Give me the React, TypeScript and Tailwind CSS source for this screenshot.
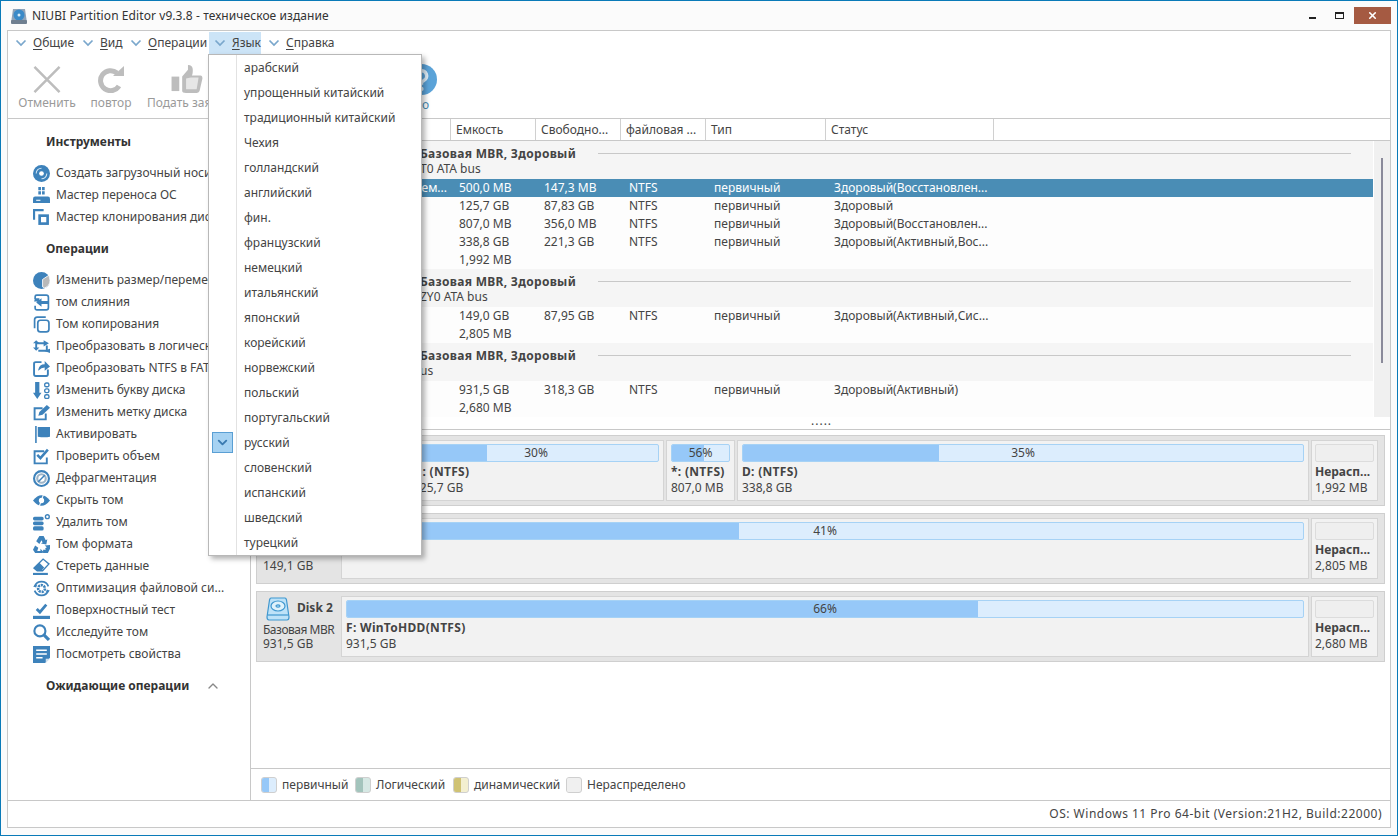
import { ChevronDown, ChevronUp, X } from "lucide-react";
import type { ReactNode } from "react";

const BLUE = "#3d82bb";

function Ico({ children }: { children: ReactNode }) {
  return (
    <svg viewBox="0 0 16 16" className="h-[17px] w-[17px] shrink-0" fill="none" stroke={BLUE} strokeWidth="1.6">
      {children}
    </svg>
  );
}

const F = { fill: BLUE, stroke: "none" };

const tools: { label: string; icon: ReactNode }[] = [
  {
    label: "Создать загрузочный носит",
    icon: (
      <>
        <circle cx="8" cy="8" r="8" {...F} />
        <circle cx="8" cy="8" r="2.200" fill="#fff" stroke="none" />
        <path d="M3 8a5 5 0 0 1 5-5M13 8a5 5 0 0 1-5 5" stroke="#cfe3f2" strokeWidth="1" />
      </>
    ),
  },
  {
    label: "Мастер переноса ОС",
    icon: (
      <>
        <path d="M5 0h2.500v3H5zM8.500 0H11v3H8.500zM5 4h2.500v3H5zM8.500 4H11v3H8.500z" {...F} />
        <path d="M0 11q0-2 2-2h12q2 0 2 2v4H0z" {...F} />
        <path d="M3 12.500h4" stroke="#fff" strokeWidth="1" />
      </>
    ),
  },
  {
    label: "Мастер клонирования диск",
    icon: (
      <>
        <path d="M1 10V1h9" strokeWidth="2" />
        <path d="M5 5h10v10H5z" {...F} />
        <path d="M7.500 7.500h5v5h-5z" fill="#fff" stroke="none" />
      </>
    ),
  },
];

const ops: { label: string; icon: ReactNode }[] = [
  {
    label: "Изменить размер/перемес",
    icon: (
      <>
        <circle cx="8" cy="8" r="8" {...F} />
        <path d="M15 3l1 5q0 5-5 7l-2-1V7z" fill="#b9b9b9" stroke="#fff" strokeWidth="0.800" />
      </>
    ),
  },
  {
    label: "том слияния",
    icon: (
      <>
        <path d="M2 5V2.500Q2 1 3.500 1h9Q14.500 1 14.500 3v10q0 2-2 2h-9Q2 15 2 13.500V11" />
        <path d="M1 7h5V4l-4 0zM8 4L3 8l5 4V9.500h7v-3H8z" {...F} />
      </>
    ),
  },
  {
    label: "Том копирования",
    icon: (
      <>
        <path d="M1.500 11.500v-8Q1.500 1 4 1h8" />
        <rect x="4.500" y="4" width="10.500" height="11" rx="2.500" />
      </>
    ),
  },
  {
    label: "Преобразовать в логическ",
    icon: (
      <>
        <path d="M3 11V5h8M5 12h8V7" strokeWidth="1.800" />
        <path d="M0 5h6L3 2zM10 2l5 3-5 3zM10 12l6-2v4zM0 9l3 3 3-3z" {...F} />
      </>
    ),
  },
  {
    label: "Преобразовать NTFS в FAT",
    icon: (
      <>
        <path d="M14 9v4.500q0 1.500-1.500 1.500h-10Q1 15 1 13.500v-10Q1 2 2.500 2H8" strokeWidth="1.800" />
        <path d="M5 9q1-5 6-5V1l5 5-5 4V7q-3 0-6 3z" {...F} />
      </>
    ),
  },
  {
    label: "Изменить букву диска",
    icon: (
      <>
        <path d="M2 0h4v10h2l-4 6-4-6h2z" {...F} />
        <rect x="11" y="1" width="4" height="3.500" rx="1.500" strokeWidth="1.300" />
        <rect x="11" y="6.500" width="4" height="3.500" rx="1.500" strokeWidth="1.300" />
        <rect x="11" y="12" width="4" height="3.500" rx="1.500" strokeWidth="1.300" />
      </>
    ),
  },
  {
    label: "Изменить метку диска",
    icon: (
      <>
        <path d="M12 9v5.500H1.500V4H9" strokeWidth="1.800" />
        <path d="M5 11l1-3.500L13 1l3 2.500L9 10z" {...F} />
      </>
    ),
  },
  {
    label: "Активировать",
    icon: <path d="M2 0h1.500v16H2zM4.500 1h11.500v9q-5 1-11.500 0z" {...F} />,
  },
  {
    label: "Проверить объем",
    icon: (
      <>
        <path d="M13 9v5.500H1.500V3h9" strokeWidth="1.800" />
        <path d="M4 6.500l3 3 7-8" strokeWidth="2.400" />
      </>
    ),
  },
  {
    label: "Дефрагментация",
    icon: (
      <>
        <circle cx="8" cy="8" r="7" strokeWidth="2" />
        <circle cx="8" cy="8" r="4" stroke="#9db4c7" strokeWidth="2" />
        <path d="M5 11l6-6" stroke="#3d82bb" strokeWidth="1.400" />
      </>
    ),
  },
  {
    label: "Скрыть том",
    icon: (
      <>
        <path d="M0 8q4-5 8-5t8 5q-4 5-8 5t-8-5z" {...F} />
        <circle cx="8" cy="8" r="2.500" fill="#fff" stroke="none" />
        <path d="M6 13l4-11" stroke="#fff" strokeWidth="1" />
      </>
    ),
  },
  {
    label: "Удалить том",
    icon: (
      <>
        <rect x="0" y="2.500" width="10" height="3.500" rx="1.500" {...F} />
        <rect x="0" y="7" width="10" height="3.500" rx="1.500" {...F} />
        <rect x="0" y="11.500" width="10" height="4" rx="1.500" {...F} />
        <circle cx="13.500" cy="2.500" r="1.800" strokeWidth="1.300" />
      </>
    ),
  },
  {
    label: "Том формата",
    icon: <path d="M6 0h4l2 4 1.500-1-1 5-5-1 1.500-1-1-2-2 3.500L3 5zM0 13l2-4 3 2-1 3h3v-2l3 3-3 2.500V16H2zM16 12l-2 4H9.500v-3H12l-.5-1.500L13 10.500 11 9l5-.5z" {...F} />,
  },
  {
    label: "Стереть данные",
    icon: (
      <>
        <path d="M1 9.500L9.500 1 15 5.500 9 12H4z" fill="#fff" stroke={BLUE} strokeWidth="1.300" />
        <path d="M1 9.500L6 4.500 10.500 9 8 12H4z" {...F} />
        <path d="M0 14h14v2H0z" {...F} />
      </>
    ),
  },
  {
    label: "Оптимизация файловой си...",
    icon: (
      <>
        <path d="M1.500 6a7 7 0 0 1 13 0M14.500 10a7 7 0 0 1-13 0" strokeWidth="1.600" />
        <circle cx="8" cy="8" r="3.200" strokeWidth="2.400" strokeDasharray="2 0.800" />
        <path d="M0 6l3 1 1-3zM16 10l-3-1-1 3z" {...F} />
      </>
    ),
  },
  {
    label: "Поверхностный тест",
    icon: (
      <>
        <path d="M0 13h16v3H0z" {...F} />
        <path d="M3.500 6.500l3 3 6-7" strokeWidth="2.600" />
      </>
    ),
  },
  {
    label: "Исследуйте том",
    icon: (
      <>
        <circle cx="6.500" cy="6.500" r="5.200" strokeWidth="2" />
        <path d="M10.500 10.500L15 15" strokeWidth="3" />
      </>
    ),
  },
  {
    label: "Посмотреть свойства",
    icon: (
      <>
        <path d="M0 0h16v11l-4.500 5H0z" {...F} />
        <path d="M3 4h10M3 7.500h10M3 11h6" stroke="#fff" strokeWidth="1.300" />
        <path d="M12 12h4l-4 4z" fill="#cfe0ee" stroke="none" />
      </>
    ),
  },
];

const menus = [
  { label: "Общие", cls: "w-[67px]" },
  { label: "Вид", cls: "w-[48px]" },
  { label: "Операции", cls: "w-[79px]" },
  { label: "Язык", cls: "w-[52px] pl-[5px] bg-[#cce4f7]" },
  { label: "Справка", cls: "ml-[7px]" },
];

const langs = ["арабский", "упрощенный китайский", "традиционный китайский", "Чехия", "голландский", "английский", "фин.", "французский", "немецкий", "итальянский", "японский", "корейский", "норвежский", "польский", "португальский", "русский", "словенский", "испанский", "шведский", "турецкий"];

const columns = [
  { label: "", w: "w-[200px]" },
  { label: "Емкость", w: "w-[85px]" },
  { label: "Свободно...", w: "w-[85px]" },
  { label: "файловая ...", w: "w-[85px]" },
  { label: "Тип", w: "w-[120px]" },
  { label: "Статус", w: "w-[168px]" },
];

type Row = { name?: string; cap: string; free?: string; fs?: string; type?: string; status?: string; sel?: boolean };

const groups: { title: string; sub: string; rows: Row[] }[] = [
  {
    title: "Базовая MBR, Здоровый",
    sub: "T0 ATA bus",
    rows: [
      { name: "ем...", cap: "500,0 MB", free: "147,3 MB", fs: "NTFS", type: "первичный", status: "Здоровый(Восстановлен...", sel: true },
      { cap: "125,7 GB", free: "87,83 GB", fs: "NTFS", type: "первичный", status: "Здоровый" },
      { cap: "807,0 MB", free: "356,0 MB", fs: "NTFS", type: "первичный", status: "Здоровый(Восстановлен..." },
      { cap: "338,8 GB", free: "221,3 GB", fs: "NTFS", type: "первичный", status: "Здоровый(Активный,Вос..." },
      { cap: "1,992 MB" },
    ],
  },
  {
    title: "Базовая MBR, Здоровый",
    sub: "ZY0 ATA bus",
    rows: [
      { cap: "149,0 GB", free: "87,95 GB", fs: "NTFS", type: "первичный", status: "Здоровый(Активный,Сис..." },
      { cap: "2,805 MB" },
    ],
  },
  {
    title: "Базовая MBR, Здоровый",
    sub: "us",
    rows: [
      { cap: "931,5 GB", free: "318,3 GB", fs: "NTFS", type: "первичный", status: "Здоровый(Активный)" },
      { cap: "2,680 MB" },
    ],
  },
];

function Part({ w, pct, name, size }: { w: string; pct: number; name: string; size: string }) {
  return (
    <div className={`${w} h-[61px] overflow-hidden border border-[#d4d4d4] bg-[#f2f2f2] px-[4px] pt-[3px]`}>
      <div className="relative h-[18px] overflow-hidden rounded-[2px] border border-[#a6d2f5] bg-[#dcedfd] text-center leading-[16px]">
        <div className="absolute bottom-0 left-0 top-0 bg-[#96c8f8]" style={{ width: `${pct}%` }} />
        <span className="relative">{pct}%</span>
      </div>
      <div className="mt-[2px] whitespace-nowrap font-bold leading-[16px] tracking-[0.3px]">{name}</div>
      <div className="whitespace-nowrap leading-[16px]">{size}</div>
    </div>
  );
}

function Unalloc({ size }: { size: string }) {
  return (
    <div className="h-[61px] w-[67px] shrink-0 border border-[#d4d4d4] bg-[#f2f2f2] px-[3px] pt-[3px]">
      <div className="h-[18px] rounded-[2px] border border-[#dcdcdc] bg-[#efefef]" />
      <div className="mt-[2px] font-bold leading-[16px]">Нерасп...</div>
      <div className="leading-[16px]">{size}</div>
    </div>
  );
}

function DiskRow({ name, kind, size, children }: { name?: string; kind?: string; size?: string; children: ReactNode }) {
  return (
    <div className="mx-[5px] flex h-[71px] border border-[#cfcfcf] bg-[#e4e4e4] pr-[6px] pt-[4px]">
      <div className="w-[84px] shrink-0 pl-[6px] pt-[1px]">
        {name && (
          <div className="flex h-[26px] items-start gap-[7px] pl-[3px]">
            <svg viewBox="0 0 24 25" className="h-[25px] w-[24px]" fill="#bde2f8" stroke="#3f97cf" strokeWidth="1.200">
              <path d="M5 1h14q1 0 1.500 2L23 20q0 3-2 3H3q-2 0-2-3L3.500 3Q4 1 5 1z" />
              <path d="M1.500 18h21" />
              <ellipse cx="12" cy="9" rx="7" ry="5" fill="#dff2fb" />
              <ellipse cx="12" cy="9" rx="2" ry="1.200" fill="#bde2f8" />
            </svg>
            <span className="mt-[2px] font-bold">{name}</span>
          </div>
        )}
        {!name && <div className="h-[26px]" />}
        <div className="whitespace-nowrap leading-[14px] tracking-[-0.5px]">{kind}&nbsp;</div>
        <div className="leading-[13px]">{size}</div>
      </div>
      <div className="flex min-w-0 flex-1 gap-[2px]">{children}</div>
    </div>
  );
}

function Legend({ label, w, left, right }: { label: string; w: string; left: string; right: string }) {
  return (
    <div className={`flex items-center gap-[5px] ${w}`}>
      <span className={`h-[16px] w-[16px] overflow-hidden rounded-[3px] border border-[#cfcfcf] ${right}`}>
        <span className={`block h-full w-[7px] ${left}`} />
      </span>
      <span>{label}</span>
    </div>
  );
}

export default function App() {
  return (
    <div className="relative h-[836px] w-[1398px] overflow-hidden border border-[#0a7ab8] bg-[#fbfbfb] font-['Noto_Sans','DejaVu_Sans',sans-serif] text-[12px] text-[#444]">
      {/* title bar */}
      <div className="flex h-[29px] items-center pl-[9px] pr-[6px]">
        <svg viewBox="0 0 18 18" className="mr-[4px] h-[18px] w-[18px]">
          <path d="M3 2h12l2 14H1z" fill="#8fa3b8" />
          <circle cx="9" cy="8" r="5.500" fill="#3a8ac8" />
          <circle cx="9" cy="8" r="1.500" fill="#d8ecf8" />
          <rect x="1" y="13" width="16" height="4" rx="1" fill="#6f7f90" />
        </svg>
        <span className="text-[12px] tracking-[0.08px] text-[#333]">NIUBI Partition Editor v9.3.8 - техническое издание</span>
        <div className="ml-auto flex items-center">
          <div className="mt-[5px] h-[2px] w-[7px] bg-[#222]" />
          <div className="ml-[19px] h-[7px] w-[9px] border border-t-2 border-[#222]" />
          <div className="ml-[10px] flex h-[17px] w-[37px] items-center justify-center bg-[#a55a42]">
            <X className="h-[11px] w-[11px] text-white" strokeWidth={3.5} />
          </div>
        </div>
      </div>

      {/* main frame */}
      <div className="mx-[6px] flex h-[798px] w-[1384px] flex-col border border-[#c8c8c8] bg-white">
        <div className="flex h-[24px] shrink-0 items-start pl-[7px] pt-[1px]">
          {menus.map((m) => (
            <div key={m.label} className={`flex h-[22px] items-center gap-[6px] ${m.cls}`}>
              <svg viewBox="0 0 12 12" className="h-[12px] w-[12px] shrink-0" fill="none" stroke="#7aa7cc" strokeWidth="1.700">
                <path d="M1.500 3.500L6 8l4.500-4.500" />
              </svg>
              <span>
                <u className="underline-offset-2">{m.label[0]}</u>
                {m.label.slice(1)}
              </span>
            </div>
          ))}
        </div>

        {/* toolbar */}
        <div className="flex h-[64px] shrink-0 items-start border-b border-[#c8c8c8] pl-[10px] text-[#9a9a9a]">
          <div className="flex w-[58px] flex-col items-center">
            <svg viewBox="0 0 28 28" className="mt-[11px] h-[27px] w-[28px]" fill="none" stroke="#bdbdbd" strokeWidth="2.600">
              <path d="M1 1l26 26M27 1L1 27" />
            </svg>
            <span className="mt-[2px] leading-[16px]">Отменить</span>
          </div>
          <div className="ml-[15px] flex w-[40px] flex-col items-center">
            <svg viewBox="0 0 26 27" className="mt-[11px] h-[27px] w-[26px]" fill="none" stroke="#bdbdbd" strokeWidth="5">
              <path d="M21 20a10 10 0 1 1-2-13" />
              <path d="M15 10h11V0z" fill="#bdbdbd" stroke="none" />
            </svg>
            <span className="mt-[2px] leading-[16px]">повтор</span>
          </div>
          <div className="ml-[16px] flex w-[80px] flex-col items-center">
            <svg viewBox="0 0 32 29" className="mt-[10px] h-[28px] w-[32px]" fill="#bdbdbd">
              <path d="M0 12h8v15H0z" />
              <path d="M11 12l6-7V0q5 0 5 5t-1 6h9q2 0 2 3l-3 13q-1 2-3 2H15q-4 0-4-2z" />
              <path d="M15 14l5-1h8l-2 12H15z" fill="#e6e6e6" />
            </svg>
            <span className="mt-[2px] self-start whitespace-nowrap leading-[16px]">Подать зая</span>
          </div>
          <div className="ml-[179px] flex w-[31px] flex-col">
            <svg viewBox="0 0 36 36" className="mt-[9px] h-[31px] w-[31px]">
              <circle cx="18" cy="18" r="18" fill="#5ba3d8" />
              <path d="M12 14a6 6 0 1 1 9 5l-3 2v3" fill="none" stroke="#dfeef9" strokeWidth="4" />
              <circle cx="18" cy="29" r="2.500" fill="#dfeef9" />
            </svg>
            <span className="mt-[2px] leading-[16px] text-[#4a8db5]">Про</span>
          </div>
        </div>

        <div className="flex min-h-0 flex-1">
          {/* sidebar */}
          <div className="flex w-[243px] shrink-0 flex-col border-r border-[#c8c8c8] pl-[25px]">
            <div className="mt-[14px] pl-[13px] font-bold leading-[18px] text-[#333]">Инструменты</div>
            <div className="mt-[11px] flex flex-col">
              {tools.map((t) => (
                <div key={t.label} className="flex h-[22px] items-center gap-[6px] whitespace-nowrap">
                  {t.icon && <Ico>{t.icon}</Ico>}
                  <span>{t.label}</span>
                </div>
              ))}
            </div>
            <div className="mt-[12px] pl-[13px] font-bold leading-[18px] text-[#333]">Операции</div>
            <div className="mt-[11px] flex flex-col">
              {ops.map((t) => (
                <div key={t.label} className="flex h-[22px] items-center gap-[6px] whitespace-nowrap">
                  <Ico>{t.icon}</Ico>
                  <span>{t.label}</span>
                </div>
              ))}
            </div>
            <div className="mt-[12px] flex items-center pl-[13px] leading-[18px]">
              <span className="font-bold text-[#333]">Ожидающие операции</span>
              <ChevronUp className="ml-[16px] h-[16px] w-[16px] text-[#888]" strokeWidth={2} />
            </div>
          </div>

          {/* right pane */}
          <div className="flex min-w-0 flex-1 flex-col">
            <div className="flex h-[22px] shrink-0 items-center border-b border-[#c8c8c8]">
              {columns.map((c) => (
                <div key={c.w + c.label} className={`${c.w} h-full border-r border-[#d0d0d0] pl-[5px] leading-[22px]`}>
                  {c.label}
                </div>
              ))}
            </div>

            <div className="flex h-[289px] shrink-0 border-b border-[#c8c8c8]">
              <div className="flex min-w-0 flex-1 flex-col">
                {groups.map((g, i) => (
                  <div key={i}>
                    <div className="h-[38px] bg-[#f5f5f5] pl-[169px] pt-[5px] leading-[15px]">
                      <div className="flex items-center gap-[22px] pr-[22px]">
                        <span className="font-bold tracking-[0.3px]">{g.title}</span>
                        <span className="h-px flex-1 bg-[#c8c8c8]" />
                      </div>
                      <div>{g.sub}</div>
                    </div>
                    {g.rows.map((r, j) => (
                      <div key={j} className={`flex h-[18px] items-center whitespace-nowrap leading-[18px] ${r.sel ? "bg-[#4a8db5] text-white" : "bg-[#fdfdfd]"}`}>
                        <div className="w-[200px] pr-[4px] text-right">{r.name}</div>
                        <div className="w-[85px] pl-[8px]">{r.cap}</div>
                        <div className="w-[85px] pl-[8px]">{r.free}</div>
                        <div className="w-[85px] pl-[8px]">{r.fs}</div>
                        <div className="w-[120px] pl-[8px]">{r.type}</div>
                        <div className="w-[168px] pl-[8px]">{r.status}</div>
                      </div>
                    ))}
                  </div>
                ))}
                <div className="pl-[560px] leading-[8px] tracking-[1px]">.....</div>
              </div>
              <div className="ml-px h-[276px] w-[16px] shrink-0 bg-[#f0f0f0] pl-[7px] pt-[17px]">
                <div className="h-[205px] w-[2px] bg-[#8a8a9a]" />
              </div>
            </div>

            {/* disk map */}
            <div className="flex flex-1 flex-col gap-[7px] border-b border-[#c8c8c8] pt-[5px]">
              <DiskRow>
                <Part w="w-[65px]" pct={30} name="" size="" />
                <Part w="flex-1 min-w-0" pct={30} name="H: (NTFS)" size="125,7 GB" />
                <Part w="w-[69px]" pct={56} name="*: (NTFS)" size="807,0 MB" />
                <Part w="w-[572px]" pct={35} name="D: (NTFS)" size="338,8 GB" />
                <Unalloc size="1,992 MB" />
              </DiskRow>
              <DiskRow size="149,1 GB">
                <Part w="flex-1 min-w-0" pct={41} name="" size="149,0 GB" />
                <Unalloc size="2,805 MB" />
              </DiskRow>
              <DiskRow name="Disk 2" kind="Базовая MBR" size="931,5 GB">
                <Part w="flex-1 min-w-0" pct={66} name="F: WinToHDD(NTFS)" size="931,5 GB" />
                <Unalloc size="2,680 MB" />
              </DiskRow>
            </div>

            <div className="flex h-[31px] shrink-0 items-center pl-[10px]">
              <Legend w="w-[94px]" label="первичный" left="bg-[#96c8f8]" right="bg-[#dcedfd]" />
              <Legend w="w-[98px]" label="Логический" left="bg-[#a3c4bc]" right="bg-[#d6e8e4]" />
              <Legend w="w-[113px]" label="динамический" left="bg-[#cfc274]" right="bg-[#f3efd0]" />
              <Legend w="w-[120px]" label="Нераспределено" left="bg-[#f0f0f0]" right="bg-[#f0f0f0]" />
            </div>
          </div>
        </div>

        <div className="flex h-[27px] shrink-0 items-center justify-end border-t border-[#c8c8c8] pr-[8px] tracking-[0.5px]">
          OS: Windows 11 Pro 64-bit (Version:21H2, Build:22000)
        </div>
      </div>

      {/* open Язык menu */}
      <div className="absolute left-[207px] top-[53px] w-[214px] border border-[#b8b8b8] bg-white shadow-[3px_3px_5px_rgba(0,0,0,0.3)]">
        <div className="absolute bottom-0 left-[27px] top-0 w-px bg-[#e2e2e2]" />
        {langs.map((l) => (
          <div key={l} className="relative flex h-[25px] items-center whitespace-nowrap pl-[35px]">
            {l === "русский" && (
              <span className="absolute left-[3px] top-[2px] flex h-[21px] w-[21px] items-center justify-center border border-[#5a9fd4] bg-[#a6d2f2]">
                <ChevronDown className="h-[15px] w-[15px] text-[#3a7ab0]" strokeWidth={3} />
              </span>
            )}
            {l}
          </div>
        ))}
      </div>
    </div>
  );
}
